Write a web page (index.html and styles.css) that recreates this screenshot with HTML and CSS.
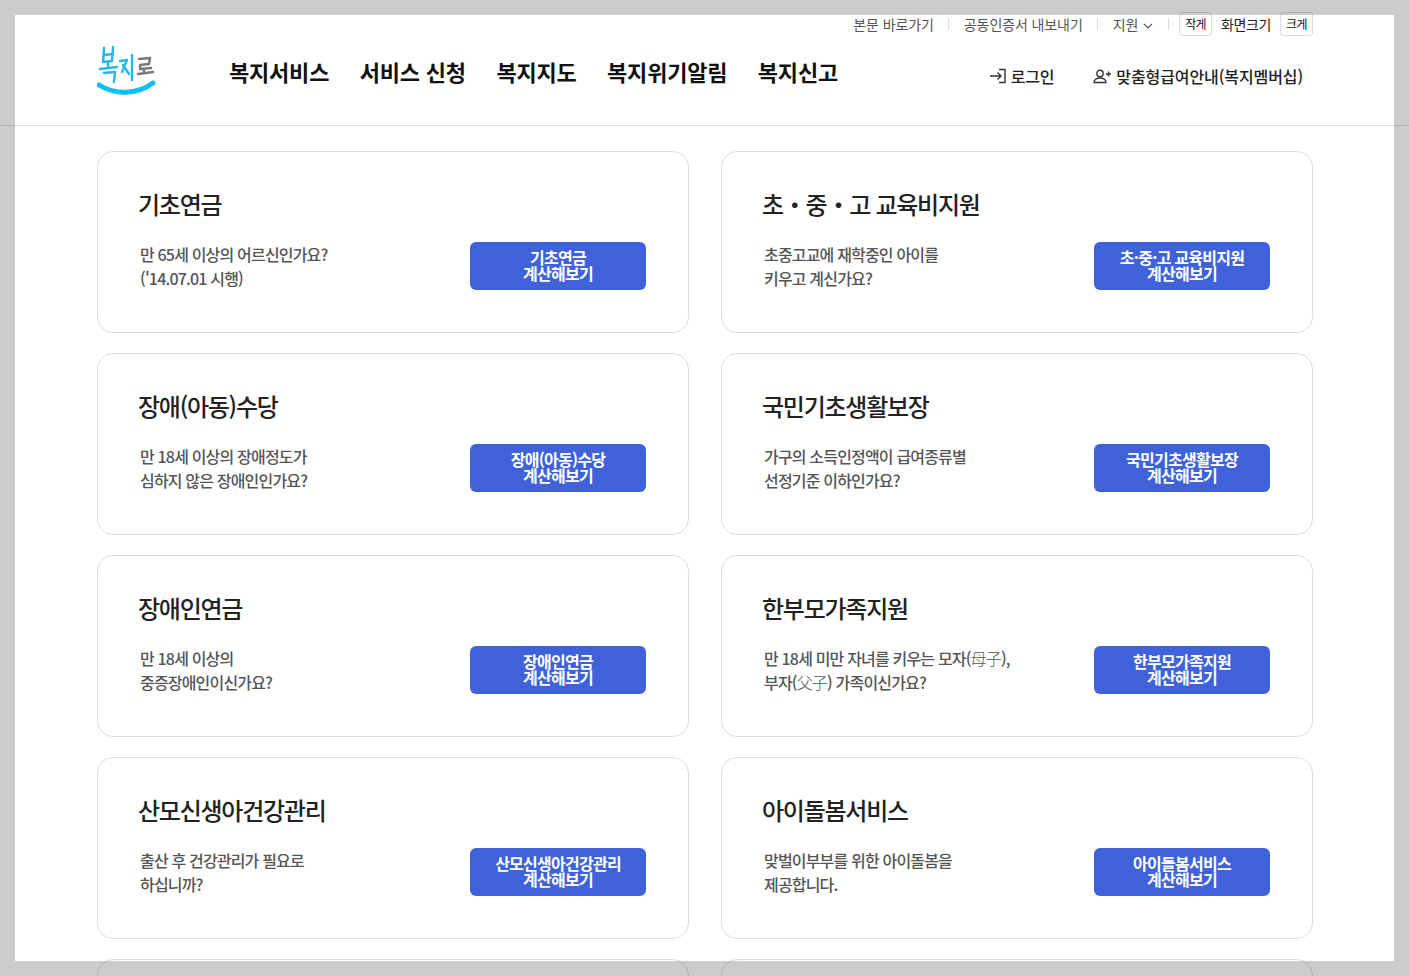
FILE: index.html
```html
<!DOCTYPE html>
<html lang="ko">
<head>
<meta charset="utf-8">
<title>복지로</title>
<link rel="stylesheet" href="styles.css">
</head>
<body>
<header class="header">
  <div class="util">
    <a class="util-link">본문 바로가기</a><i class="sep"></i>
    <a class="util-link">공동인증서 내보내기</a><i class="sep"></i>
    <a class="util-link">지원 <svg class="chev" width="10" height="6" viewBox="0 0 10 6"><path d="M1 1l4 4 4-4" fill="none" stroke="#555" stroke-width="1.1"/></svg></a><i class="sep sep-last"></i>
    <span class="size-btn">작게</span><span class="size-label">화면크기</span><span class="size-btn">크게</span>
  </div>
  <div class="main-bar">
    <svg class="logo" width="60" height="54" viewBox="0 0 60 54">
      <g fill="none" stroke-linecap="round" stroke-linejoin="round">
        <path d="M7 4L6 18M16 3L15 17M7 11L16 10M6 18L15 17M3 25L20 23M11 18V24M7 29L18 28L17 38" stroke="#22b8ec" stroke-width="2.400"/>
        <path d="M23 17L30 16L25 28M26 21L32 30M35 11V36" stroke="#22b8ec" stroke-width="2.400"/>
        <path d="M42 15L53 14L52 20L43 21V25L54 24M47 25V29M41 30L56 28" stroke="#77787b" stroke-width="2.400"/>
        <path d="M2 41C18 51 40 51 56 39" stroke="#10bff2" stroke-width="5"/>
      </g>
    </svg>
    <nav class="gnb"><a>복지서비스</a><a>서비스 신청</a><a>복지지도</a><a>복지위기알림</a><a>복지신고</a></nav>
    <div class="member">
      <a class="login"><svg width="18" height="16" viewBox="0 0 18 16"><path d="M1 8h11M8.500 4.500L12 8l-3.500 3.500M10 1.500h6v13h-6" fill="none" stroke="#333" stroke-width="1.400"/></svg>로그인</a>
      <a class="join"><svg width="19" height="15" viewBox="0 0 19 15"><circle cx="7" cy="4.500" r="3.200" fill="none" stroke="#333" stroke-width="1.400"/><path d="M1 13.500c0-6 12-6 12 0z M13 5h5M15.500 2.500v5" fill="none" stroke="#333" stroke-width="1.400"/></svg>맞춤형급여안내(복지멤버십)</a>
    </div>
  </div>
</header>
<main class="grid">
  <section class="card"><h2>기초연금</h2><div class="row"><p>만 65세 이상의 어르신인가요?<br>('14.07.01 시행)</p><a class="btn">기초연금<br>계산해보기</a></div></section>
  <section class="card"><h2>초・중・고 교육비지원</h2><div class="row"><p>초중고교에 재학중인 아이를<br>키우고 계신가요?</p><a class="btn">초·중·고 교육비지원<br>계산해보기</a></div></section>
  <section class="card"><h2>장애(아동)수당</h2><div class="row"><p>만 18세 이상의 장애정도가<br>심하지 않은 장애인인가요?</p><a class="btn">장애(아동)수당<br>계산해보기</a></div></section>
  <section class="card"><h2>국민기초생활보장</h2><div class="row"><p>가구의 소득인정액이 급여종류별<br>선정기준 이하인가요?</p><a class="btn">국민기초생활보장<br>계산해보기</a></div></section>
  <section class="card"><h2>장애인연금</h2><div class="row"><p>만 18세 이상의<br>중증장애인이신가요?</p><a class="btn">장애인연금<br>계산해보기</a></div></section>
  <section class="card"><h2>한부모가족지원</h2><div class="row"><p>만 18세 미만 자녀를 키우는 모자(<span class="hanja">母子</span>),<br>부자(<span class="hanja">父子</span>) 가족이신가요?</p><a class="btn">한부모가족지원<br>계산해보기</a></div></section>
  <section class="card"><h2>산모신생아건강관리</h2><div class="row"><p>출산 후 건강관리가 필요로<br>하십니까?</p><a class="btn">산모신생아건강관리<br>계산해보기</a></div></section>
  <section class="card"><h2>아이돌봄서비스</h2><div class="row"><p>맞벌이부부를 위한 아이돌봄을<br>제공합니다.</p><a class="btn">아이돌봄서비스<br>계산해보기</a></div></section>
  <section class="card"></section>
  <section class="card"></section>
</main>
<div class="frame"></div>
</body>
</html>
```
FILE: styles.css
```css
* { box-sizing: border-box; }
html, body { margin: 0; height: 976px; overflow: hidden; background: #fff; }
body { font-family: "Noto Sans CJK KR", "Noto Sans", sans-serif; color: #222; }
.header { height: 126px; border-bottom: 1px solid #ddd; }
.util { height: 38px; padding: 12px 96px 0 0; display: flex; justify-content: flex-end; align-items: flex-start; font-size: 14px; letter-spacing: -0.1px; color: #555; }
.util-link { line-height: 24px; white-space: nowrap; }
.chev { margin-left: 1px; vertical-align: 1px; }
.sep { width: 1px; height: 12px; margin: 6px 15px 0 14px; background: #ddd; }
.sep-last { margin: 6px 10px 0 15px; }
.size-btn { height: 24px; width: 33px; border: 1px solid #ddd; border-radius: 3px; background: #fff; color: #111; font-size: 12px; line-height: 22px; text-align: center; letter-spacing: -0.6px; }
.size-label { color: #222; line-height: 24px; margin: 0 9px; font-size: 14px; letter-spacing: -0.4px; }
.main-bar { display: flex; align-items: flex-start; padding-left: 97px; }
.logo { margin-top: 6px; display: block; }
.gnb { display: flex; gap: 30.5px; margin-left: 72px; font-size: 22px; font-weight: 700; color: #111; line-height: 32px; letter-spacing: -0.2px; margin-top: 17px; }
.member { display: flex; margin-left: auto; margin-right: 106px; gap: 39px; margin-top: 26px; font-size: 16px; line-height: 24px; font-weight: 500; color: #222; letter-spacing: -0.2px; }
.login, .join { display: flex; align-items: center; white-space: nowrap; }
.login svg, .join svg { margin-right: 4px; }
.join { letter-spacing: -0.1px; }
.grid { display: grid; grid-template-columns: 592px 592px; gap: 20px 32px; padding: 25px 0 0 97px; }
.card { height: 182px; border: 1px solid #ddd; border-radius: 16px; padding: 34px 42px 0 40px; background: #fff; }
.card h2 { margin: 0; font-size: 24px; font-weight: 500; line-height: 36px; letter-spacing: -1.25px; color: #222; }
.row { display: flex; justify-content: space-between; align-items: center; margin-top: 20px; padding-left: 2px; }
.row p { margin: 0; font-size: 16px; line-height: 24px; color: #555; font-weight: 500; letter-spacing: -0.82px; }
.hanja { font-weight: 300; }
.btn { width: 176px; height: 48px; border-radius: 6px; background: #3f62d8; color: #fff; font-size: 16px; font-weight: 700; line-height: 16px; padding-top: 7px; text-align: center; letter-spacing: -0.75px; white-space: nowrap; }
.frame { position: fixed; inset: 0; border: 15px solid rgba(0,0,0,.2); pointer-events: none; z-index: 1; }
```
